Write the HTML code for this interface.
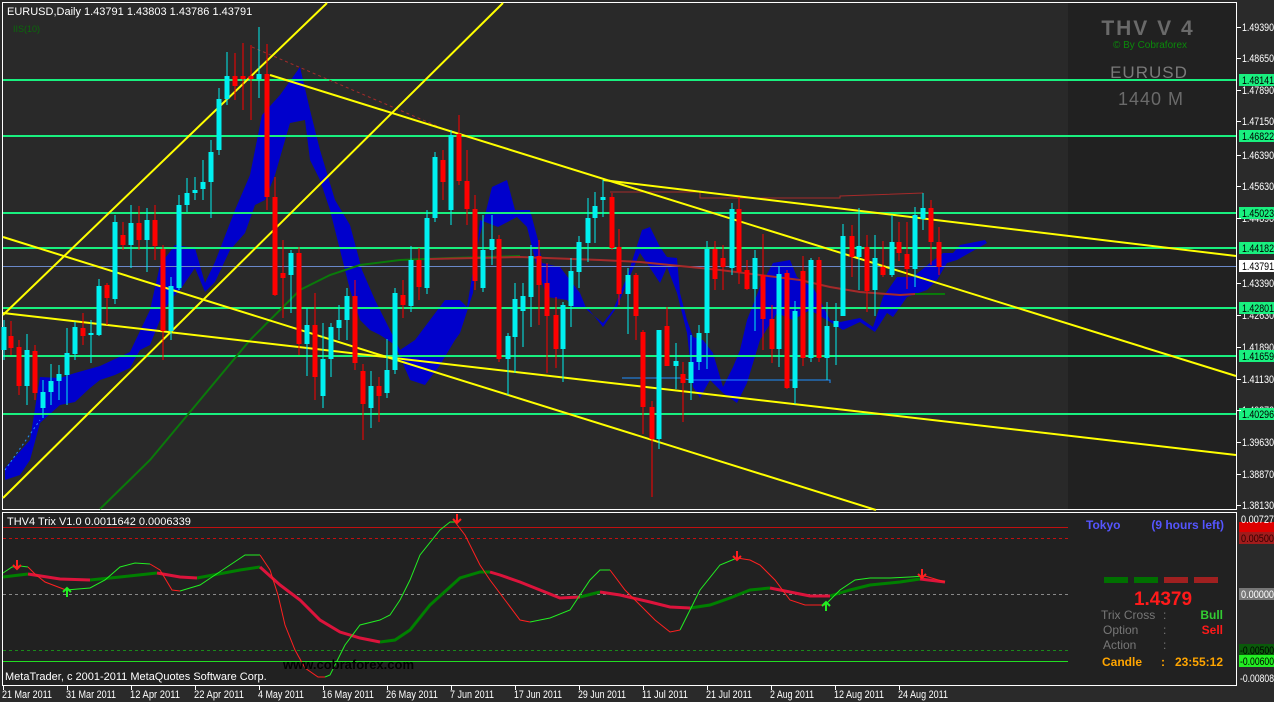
<!DOCTYPE html>
<html><head><meta charset="utf-8"><style>
html,body{margin:0;padding:0;background:#000;}
svg{display:block;font-family:"Liberation Sans",sans-serif;}
</style></head><body>
<svg width="1274" height="702" viewBox="0 0 1274 702" xmlns="http://www.w3.org/2000/svg">
<rect width="1274" height="702" fill="#2a2a2a"/>
<rect x="3" y="3" width="1233" height="506" fill="#292929"/>
<rect x="1068" y="3" width="168" height="506" fill="#212121"/>
<rect x="3" y="512" width="1233" height="173" fill="#212121"/>
<g stroke="#fff" stroke-width="1" fill="none">
<path d="M2.5 2.5H1236.5V509.5H2.5Z"/>
<path d="M2.5 512.5H1236.5V685.5H2.5Z"/>
</g>

<polygon fill="#0000cc" points="5,468 30,440 40,377 60,378 75,373 100,366 130,352 150,310 160,265 175,245 195,248 205,283 215,262 235,210 250,175 262,115 280,95 300,67 310,110 320,150 335,200 350,225 362,270 375,300 390,330 400,350 415,340 430,320 445,300 460,300 467,307 477,247 492,187 507,180 515,210 530,210 538,240 542,263 560,267 580,293 587,310 603,323 613,310 627,277 642,230 650,227 660,247 667,257 677,258 680,293 687,320 693,337 703,340 713,353 723,387 733,367 740,350 747,320 760,287 773,263 790,260 797,277 803,282 813,287 820,300 830,320 840,322 860,318 873,327 883,297 897,277 913,277 930,263 943,253 953,253 960,245 985,240 987,243 957,260 947,263 937,280 927,290 907,297 893,317 887,313 875,332 860,322 843,330 827,320 810,310 793,320 777,313 760,340 747,383 737,403 723,393 710,380 700,398 693,387 687,333 677,293 667,267 660,283 640,253 627,283 617,307 603,327 587,307 573,307 567,300 547,297 537,267 527,227 517,217 498,227 480,220 473,293 460,333 455,340 440,365 425,385 410,380 395,345 380,335 370,330 360,320 350,290 340,250 330,210 320,180 310,160 305,120 290,123 275,175 265,200 255,205 245,233 230,250 215,282 205,292 195,268 180,290 170,300 160,320 150,345 140,350 130,368 115,375 100,380 90,388 75,402 60,405 40,423 30,460 20,475 5,480"/>

<g stroke="#19f07f" stroke-width="2">
<path d="M3 80H1236M3 136H1236M3 213H1236M3 248H1236M3 308H1236M3 356H1236M3 414H1236"/>
</g>
<path d="M3 266.5H1236" stroke="#6a88c8" stroke-width="1"/>

<polyline fill="none" stroke="#0a7a0a" stroke-width="2" points="100,509 150,460 200,400 250,340 300,290 330,275 360,265 400,260 450,258 520,256"/>
<polyline fill="none" stroke="#a52a2a" stroke-width="2" points="430,259 520,257 600,260 640,262 680,266 720,270 760,275 800,280 830,287 860,292 900,295 915,294"/>
<path d="M915 294L945 294" stroke="#0a7a0a" stroke-width="2"/>
<path d="M252 47L458 135" stroke="#a52a2a" stroke-width="1" stroke-dasharray="3,3"/>
<path d="M610 192H700V198H840V196L923 193" stroke="#a52a2a" stroke-width="1" fill="none"/>
<path d="M622 378H680L690 380H830V383" stroke="#1e90ff" stroke-width="1" fill="none"/>
<path d="M5 470L40 420" stroke="#1e90ff" stroke-width="1" stroke-dasharray="2,3"/>

<g stroke="#ffff00" stroke-width="2" fill="none">
<path d="M3 315L327 3"/>
<path d="M3 498L503 3"/>
<path d="M3 237L876 510"/>
<path d="M3 313L1236 455"/>
<path d="M270 75L1236 376"/>
<path d="M603 180L1236 256"/>
</g>

<g>
<g stroke="#00f0f0" stroke-width="1">
<path d="M4 320V360M27 334V405M43 380V418M51 364V405M59 365V400M67 328V405M75 322V360M91 320V363M99 279V336M115 215V304M131 205V268M147 208V272M171 277V340M179 195V290M187 178V212M195 177V200M203 160V200M211 140V218M219 88V155M227 52V105M259 27V98M291 250V313M307 308V376M323 323V408M331 323V377M339 305V340M347 288V340M371 371V428M387 339V398M395 288V374M411 246V312M427 210V294M435 152V222M451 130V225M483 215V292M492 215V265M508 333V395M515 283V373M523 283V347M531 245V327M563 302V382M571 258V327M579 236V288M588 198V262M595 192V243M603 180V217M628 268V334M659 330V449M676 343V389M691 335V400M699 325V370M707 241V369M732 203V275M755 250V331M779 266V367M795 301V404M811 258V362M827 302V380M836 303V365M843 224V316M859 208V290M875 235V316M892 215V277M915 207V287M923 193V230"/>
</g>
<g stroke="#ff0000" stroke-width="1">
<path d="M11 321V355M19 340V395M35 345V400M83 313V345M107 283V325M123 222V250M139 206V250M155 205V260M163 245V360M235 53V100M243 43V110M251 45V120M267 44V210M275 177V296M283 240V318M299 247V355M315 293V400M355 280V370M363 364V440M379 377V422M403 280V318M419 248V300M443 150V200M459 115V185M467 150V225M475 195V290M499 235V362M539 240V325M547 263V373M556 297V368M612 193V250M619 229V305M636 273V340M643 330V434M652 401V497M667 307V366M683 362V422M715 241V290M723 245V290M739 197V284M747 260V290M763 234V350M772 305V363M787 270V389M803 256V366M819 257V362M852 225V277M867 235V312M883 241V277M899 222V261M907 222V289M931 200V265M939 227V275"/>
</g>
<g fill="#00f0f0">
<rect x="1.5" y="327" width="5" height="23"/><rect x="24.5" y="350" width="5" height="36"/><rect x="40.5" y="392" width="5" height="16"/><rect x="48.5" y="381" width="5" height="11"/><rect x="56.5" y="374" width="5" height="7"/><rect x="64.5" y="353" width="5" height="22"/><rect x="72.5" y="327" width="5" height="27"/><rect x="88.5" y="333" width="5" height="2"/><rect x="96.5" y="286" width="5" height="49"/><rect x="112.5" y="222" width="5" height="77"/><rect x="128.5" y="223" width="5" height="22"/><rect x="144.5" y="220" width="5" height="20"/><rect x="168.5" y="286" width="5" height="45"/><rect x="176.5" y="205" width="5" height="83"/><rect x="184.5" y="193" width="5" height="12"/><rect x="192.5" y="190" width="5" height="3"/><rect x="200.5" y="182" width="5" height="7"/><rect x="208.5" y="152" width="5" height="30"/><rect x="216.5" y="99" width="5" height="51"/><rect x="224.5" y="76" width="5" height="23"/><rect x="256.5" y="74" width="5" height="5"/><rect x="288.5" y="253" width="5" height="22"/><rect x="304.5" y="325" width="5" height="19"/><rect x="320.5" y="359" width="5" height="37"/><rect x="328.5" y="327" width="5" height="32"/><rect x="336.5" y="320" width="5" height="8"/><rect x="344.5" y="296" width="5" height="24"/><rect x="368.5" y="386" width="5" height="22"/><rect x="384.5" y="370" width="5" height="23"/><rect x="392.5" y="293" width="5" height="77"/><rect x="408.5" y="260" width="5" height="46"/><rect x="424.5" y="218" width="5" height="70"/><rect x="432.5" y="157" width="5" height="61"/><rect x="448.5" y="135" width="5" height="75"/><rect x="480.5" y="250" width="5" height="38"/><rect x="489.5" y="239" width="5" height="11"/><rect x="505.5" y="336" width="5" height="23"/><rect x="512.5" y="299" width="5" height="38"/><rect x="520.5" y="296" width="5" height="15"/><rect x="528.5" y="256" width="5" height="41"/><rect x="560.5" y="305" width="5" height="44"/><rect x="568.5" y="271" width="5" height="35"/><rect x="576.5" y="242" width="5" height="30"/><rect x="585.5" y="218" width="5" height="25"/><rect x="592.5" y="206" width="5" height="12"/><rect x="600.5" y="197" width="5" height="3"/><rect x="625.5" y="275" width="5" height="19"/><rect x="656.5" y="330" width="5" height="109"/><rect x="673.5" y="361" width="5" height="5"/><rect x="688.5" y="362" width="5" height="21"/><rect x="696.5" y="333" width="5" height="29"/><rect x="704.5" y="249" width="5" height="84"/><rect x="729.5" y="209" width="5" height="59"/><rect x="752.5" y="258" width="5" height="31"/><rect x="776.5" y="274" width="5" height="75"/><rect x="792.5" y="311" width="5" height="77"/><rect x="808.5" y="260" width="5" height="98"/><rect x="824.5" y="326" width="5" height="32"/><rect x="833.5" y="321" width="5" height="6"/><rect x="840.5" y="236" width="5" height="80"/><rect x="856.5" y="246" width="5" height="11"/><rect x="872.5" y="258" width="5" height="32"/><rect x="889.5" y="242" width="5" height="33"/><rect x="912.5" y="215" width="5" height="54"/><rect x="920.5" y="208" width="5" height="11"/>
</g>
<g fill="#ff0000">
<rect x="8.5" y="336" width="5" height="12"/><rect x="16.5" y="347" width="5" height="39"/><rect x="32.5" y="351" width="5" height="42"/><rect x="80.5" y="328" width="5" height="8"/><rect x="104.5" y="285" width="5" height="13"/><rect x="120.5" y="235" width="5" height="10"/><rect x="136.5" y="223" width="5" height="17"/><rect x="152.5" y="220" width="5" height="26"/><rect x="160.5" y="249" width="5" height="82"/><rect x="232.5" y="76" width="5" height="10"/><rect x="240.5" y="76" width="5" height="3"/><rect x="248.5" y="76" width="5" height="3"/><rect x="264.5" y="74" width="5" height="123"/><rect x="272.5" y="197" width="5" height="98"/><rect x="280.5" y="273" width="5" height="5"/><rect x="296.5" y="253" width="5" height="91"/><rect x="312.5" y="325" width="5" height="52"/><rect x="352.5" y="296" width="5" height="67"/><rect x="360.5" y="371" width="5" height="33"/><rect x="376.5" y="386" width="5" height="10"/><rect x="400.5" y="295" width="5" height="10"/><rect x="416.5" y="260" width="5" height="27"/><rect x="440.5" y="160" width="5" height="22"/><rect x="456.5" y="134" width="5" height="47"/><rect x="464.5" y="181" width="5" height="28"/><rect x="472.5" y="209" width="5" height="72"/><rect x="496.5" y="239" width="5" height="120"/><rect x="536.5" y="256" width="5" height="29"/><rect x="544.5" y="283" width="5" height="33"/><rect x="553.5" y="315" width="5" height="34"/><rect x="609.5" y="197" width="5" height="51"/><rect x="616.5" y="247" width="5" height="47"/><rect x="633.5" y="275" width="5" height="41"/><rect x="640.5" y="332" width="5" height="75"/><rect x="649.5" y="407" width="5" height="32"/><rect x="664.5" y="326" width="5" height="40"/><rect x="680.5" y="374" width="5" height="9"/><rect x="712.5" y="249" width="5" height="30"/><rect x="720.5" y="258" width="5" height="9"/><rect x="736.5" y="209" width="5" height="63"/><rect x="744.5" y="270" width="5" height="19"/><rect x="760.5" y="275" width="5" height="44"/><rect x="769.5" y="319" width="5" height="30"/><rect x="784.5" y="273" width="5" height="115"/><rect x="800.5" y="271" width="5" height="87"/><rect x="816.5" y="260" width="5" height="98"/><rect x="849.5" y="236" width="5" height="21"/><rect x="864.5" y="247" width="5" height="44"/><rect x="880.5" y="267" width="5" height="8"/><rect x="896.5" y="242" width="5" height="11"/><rect x="904.5" y="254" width="5" height="15"/><rect x="928.5" y="208" width="5" height="34"/><rect x="936.5" y="242" width="5" height="25"/>
</g>
</g>

<text x="7" y="15" font-size="11" fill="#fff">EURUSD,Daily  1.43791 1.43803 1.43786 1.43791</text>
<text x="13" y="32" font-size="9" fill="#0a6a0a">IIS(10)</text>
<text x="1148" y="35" font-size="21" font-weight="bold" fill="#6a6a6a" text-anchor="middle" letter-spacing="2">THV V 4</text>
<text x="1150" y="48" font-size="10" fill="#0a8a0a" text-anchor="middle">© By Cobraforex</text>
<text x="1149" y="78" font-size="17" fill="#7a7a7a" text-anchor="middle" letter-spacing="1">EURUSD</text>
<text x="1151" y="105" font-size="18" fill="#6a6a6a" text-anchor="middle" letter-spacing="1">1440 M</text>

<g font-size="11" fill="#fff">
<text x="1242" y="31" textLength="32" lengthAdjust="spacingAndGlyphs">1.49390</text><text x="1242" y="62" textLength="32" lengthAdjust="spacingAndGlyphs">1.48650</text><text x="1242" y="94" textLength="32" lengthAdjust="spacingAndGlyphs">1.47890</text><text x="1242" y="125" textLength="32" lengthAdjust="spacingAndGlyphs">1.47150</text><text x="1242" y="159" textLength="32" lengthAdjust="spacingAndGlyphs">1.46390</text><text x="1242" y="190" textLength="32" lengthAdjust="spacingAndGlyphs">1.45630</text><text x="1242" y="222" textLength="32" lengthAdjust="spacingAndGlyphs">1.44890</text><text x="1242" y="287" textLength="32" lengthAdjust="spacingAndGlyphs">1.43390</text><text x="1242" y="319" textLength="32" lengthAdjust="spacingAndGlyphs">1.42630</text><text x="1242" y="351" textLength="32" lengthAdjust="spacingAndGlyphs">1.41890</text><text x="1242" y="383" textLength="32" lengthAdjust="spacingAndGlyphs">1.41130</text><text x="1242" y="414" textLength="32" lengthAdjust="spacingAndGlyphs">1.40370</text><text x="1242" y="446" textLength="32" lengthAdjust="spacingAndGlyphs">1.39630</text><text x="1242" y="478" textLength="32" lengthAdjust="spacingAndGlyphs">1.38870</text><text x="1242" y="509" textLength="32" lengthAdjust="spacingAndGlyphs">1.38130</text>
</g>
<g fill="#19f07f">
<rect x="1239" y="74" width="35" height="12"/><rect x="1239" y="130" width="35" height="12"/><rect x="1239" y="207" width="35" height="12"/><rect x="1239" y="242" width="35" height="12"/><rect x="1239" y="302" width="35" height="12"/><rect x="1239" y="350" width="35" height="12"/><rect x="1239" y="408" width="35" height="12"/>
</g>
<rect x="1239" y="260" width="35" height="12" fill="#fff"/>
<g font-size="11" fill="#000">
<text x="1242" y="84" textLength="32" lengthAdjust="spacingAndGlyphs">1.48141</text><text x="1242" y="140" textLength="32" lengthAdjust="spacingAndGlyphs">1.46822</text><text x="1242" y="217" textLength="32" lengthAdjust="spacingAndGlyphs">1.45023</text><text x="1242" y="252" textLength="32" lengthAdjust="spacingAndGlyphs">1.44182</text><text x="1242" y="270" textLength="32" lengthAdjust="spacingAndGlyphs">1.43791</text><text x="1242" y="312" textLength="32" lengthAdjust="spacingAndGlyphs">1.42801</text><text x="1242" y="360" textLength="32" lengthAdjust="spacingAndGlyphs">1.41659</text><text x="1242" y="418" textLength="32" lengthAdjust="spacingAndGlyphs">1.40296</text>
</g>

<g fill="none" stroke-width="1">
<path d="M3 527.5H1068" stroke="#c01010"/>
<path d="M3 538.5H1068" stroke="#c01010" stroke-dasharray="3,3"/>
<path d="M3 594.5H1068" stroke="#888" stroke-dasharray="3,3"/>
<path d="M3 650.5H1068" stroke="#1a8a1a" stroke-dasharray="3,3"/>
<path d="M3 661.5H1068" stroke="#22dd22"/>
</g>
<g fill="none" stroke-width="3">
<g stroke="#008000">
<polyline points="3,577 28,574"/><polyline points="90,580 120,577 157,573"/><polyline points="197,578 240,570 260,567"/><polyline points="380,642 395,640 410,630 430,605 460,578 480,572 490,572"/><polyline points="580,597 600,592"/><polyline points="690,608 710,605 730,598 750,590 770,588"/><polyline points="830,596 850,590 870,585 900,582 920,579"/>
</g>
<g stroke="#dc143c">
<polyline points="28,574 60,579 90,580"/><polyline points="157,573 180,577 197,578"/><polyline points="260,567 280,585 300,600 320,620 340,632 360,638 380,642"/><polyline points="490,572 500,575 520,582 540,590 560,598 580,597"/><polyline points="600,592 620,595 650,602 670,607 690,608"/><polyline points="770,588 790,592 810,596 830,596"/><polyline points="920,579 945,582"/>
</g>
</g>
<g fill="none" stroke-width="1">
<g stroke="#22ee22">
<polyline points="3,573 12,567 20,566 28,567"/><polyline points="66,590 90,588 105,580 120,567 135,563 150,564"/><polyline points="180,591 200,585 215,575 230,565 245,555 260,555"/><polyline points="325,677 330,675 345,645 360,625 380,620 390,615 400,600 410,580 420,555 440,530 450,522 455,522"/><polyline points="530,622 550,618 570,610 590,580 600,570 610,570"/><polyline points="680,630 700,590 720,565 737,558"/><polyline points="825,605 840,590 855,580 870,578 890,578 910,577 925,576"/>
</g>
<g stroke="#ff2020">
<polyline points="28,567 35,574 45,582 66,590"/><polyline points="150,564 160,570 172,590 180,591"/><polyline points="260,555 270,570 278,595 285,625 295,650 305,668 318,677 325,677"/><polyline points="455,522 465,535 480,565 490,580 505,600 520,620 530,622"/><polyline points="610,570 625,590 640,605 655,620 670,632 680,630"/><polyline points="737,558 750,560 760,565 775,580 790,600 805,605 825,605"/><polyline points="925,576 945,582"/>
</g>
</g>
<g stroke-width="2" fill="none">
<g stroke="#ff2020"><path d="M17 560V569M13 565L17 569L21 565"/><path d="M457 514V523M453 519L457 523L461 519"/><path d="M737 551V560M733 556L737 560L741 556"/><path d="M922 569V578M918 574L922 578L926 574"/></g>
<g stroke="#22ee22"><path d="M67 597V588M63 592L67 588L71 592"/><path d="M826 611V602M822 606L826 602L830 606"/></g>
</g>
<text x="7" y="525" font-size="11" fill="#fff">THV4 Trix V1.0 0.0011642 0.0006339</text>
<text x="283" y="669" font-size="13" font-weight="bold" fill="#000">www.cobraforex.com</text>
<text x="5" y="680" font-size="11" fill="#fff">MetaTrader, c 2001-2011 MetaQuotes Software Corp.</text>

<text x="1086" y="529" font-size="12" font-weight="bold" fill="#5555ff">Tokyo</text>
<text x="1224" y="529" font-size="12" font-weight="bold" fill="#5555ff" text-anchor="end">(9 hours left)</text>
<rect x="1104" y="577" width="24" height="6" fill="#007000"/><rect x="1134" y="577" width="24" height="6" fill="#007000"/><rect x="1164" y="577" width="24" height="6" fill="#a02020"/><rect x="1194" y="577" width="24" height="6" fill="#a02020"/>
<text x="1163" y="605" font-size="19" font-weight="bold" fill="#ff1a1a" text-anchor="middle">1.4379</text>
<g font-size="12" fill="#777">
<text x="1101" y="619">Trix Cross</text><text x="1103" y="634">Option</text><text x="1103" y="649">Action</text>
<text x="1163" y="619">:</text><text x="1163" y="634">:</text><text x="1163" y="649">:</text>
</g>
<text x="1223" y="619" font-size="12" font-weight="bold" fill="#33cc33" text-anchor="end">Bull</text>
<text x="1223" y="634" font-size="12" font-weight="bold" fill="#ff1a1a" text-anchor="end">Sell</text>
<g font-size="12" font-weight="bold" fill="#ffa500">
<text x="1102" y="666">Candle</text><text x="1161" y="666">:</text><text x="1223" y="666" text-anchor="end">23:55:12</text>
</g>
<rect x="1239" y="522" width="35" height="12" fill="#dd0000"/>
<rect x="1239" y="532" width="35" height="12" fill="#a01c1c"/>
<rect x="1239" y="588" width="35" height="12" fill="#777"/>
<rect x="1239" y="644" width="35" height="12" fill="#0a5a0a"/>
<rect x="1239" y="655" width="35" height="12" fill="#22ee22"/>
<g font-size="11">
<text x="1241" y="523" fill="#fff" textLength="33" lengthAdjust="spacingAndGlyphs">0.00727</text>
<text x="1241" y="542" fill="#300" textLength="33" lengthAdjust="spacingAndGlyphs">0.00500</text>
<text x="1241" y="598" fill="#fff" textLength="33" lengthAdjust="spacingAndGlyphs">0.00000</text>
<text x="1240" y="654" fill="#000" textLength="34" lengthAdjust="spacingAndGlyphs">-0.00500</text>
<text x="1240" y="665" fill="#000" textLength="34" lengthAdjust="spacingAndGlyphs">-0.00600</text>
<text x="1240" y="682" fill="#fff" textLength="34" lengthAdjust="spacingAndGlyphs">-0.00808</text>
</g>
<g font-size="11" fill="#fff">
<text x="2" y="698" textLength="50" lengthAdjust="spacingAndGlyphs">21 Mar 2011</text><text x="66" y="698" textLength="50" lengthAdjust="spacingAndGlyphs">31 Mar 2011</text><text x="130" y="698" textLength="50" lengthAdjust="spacingAndGlyphs">12 Apr 2011</text><text x="194" y="698" textLength="50" lengthAdjust="spacingAndGlyphs">22 Apr 2011</text><text x="258" y="698" textLength="46" lengthAdjust="spacingAndGlyphs">4 May 2011</text><text x="322" y="698" textLength="52" lengthAdjust="spacingAndGlyphs">16 May 2011</text><text x="386" y="698" textLength="52" lengthAdjust="spacingAndGlyphs">26 May 2011</text><text x="450" y="698" textLength="44" lengthAdjust="spacingAndGlyphs">7 Jun 2011</text><text x="514" y="698" textLength="48" lengthAdjust="spacingAndGlyphs">17 Jun 2011</text><text x="578" y="698" textLength="48" lengthAdjust="spacingAndGlyphs">29 Jun 2011</text><text x="642" y="698" textLength="46" lengthAdjust="spacingAndGlyphs">11 Jul 2011</text><text x="706" y="698" textLength="46" lengthAdjust="spacingAndGlyphs">21 Jul 2011</text><text x="770" y="698" textLength="44" lengthAdjust="spacingAndGlyphs">2 Aug 2011</text><text x="834" y="698" textLength="50" lengthAdjust="spacingAndGlyphs">12 Aug 2011</text><text x="898" y="698" textLength="50" lengthAdjust="spacingAndGlyphs">24 Aug 2011</text>
</g>
<g stroke="#fff" stroke-width="1">
<path d="M3.5 686V690M67.5 686V690M131.5 686V690M195.5 686V690M259.5 686V690M323.5 686V690M387.5 686V690M451.5 686V690M515.5 686V690M579.5 686V690M643.5 686V690M707.5 686V690M771.5 686V690M835.5 686V690M899.5 686V690"/>
<path d="M1237 27.5h4M1237 58.5h4M1237 90.5h4M1237 121.5h4M1237 155.5h4M1237 186.5h4M1237 218.5h4M1237 283.5h4M1237 315.5h4M1237 347.5h4M1237 379.5h4M1237 410.5h4M1237 442.5h4M1237 474.5h4M1237 505.5h4"/>
</g>
</svg>
</body></html>
